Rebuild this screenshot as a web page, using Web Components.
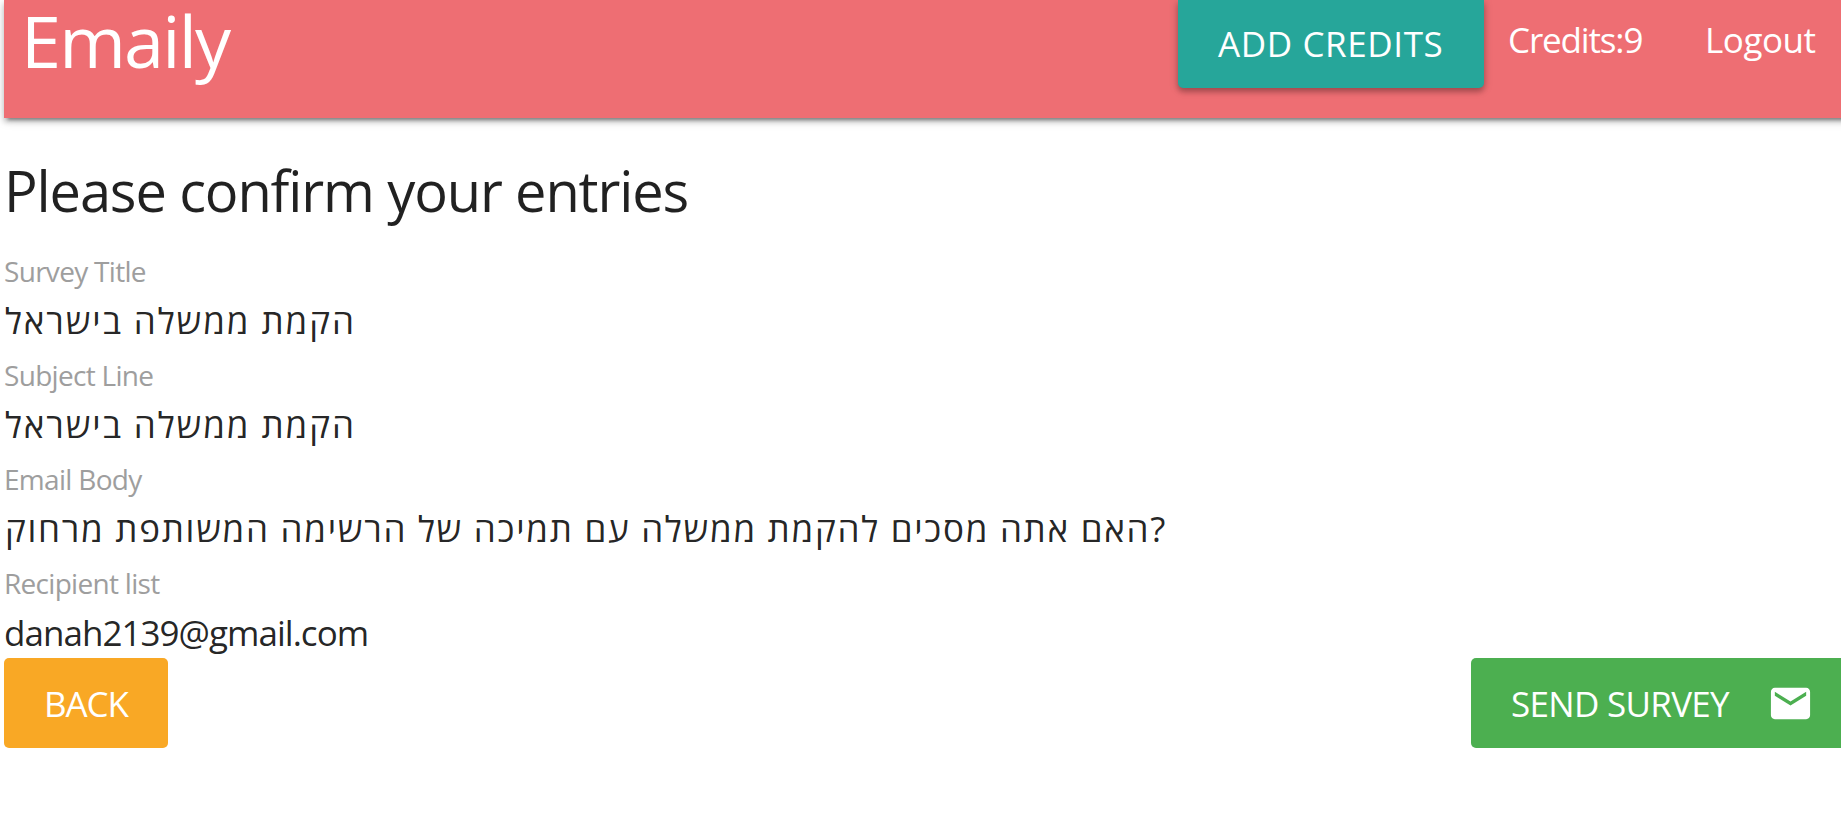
<!DOCTYPE html>
<html lang="en">
<head>
<meta charset="utf-8">
<title>Emaily</title>
<style>
body{margin:0;background:#fff;color:rgba(0,0,0,.87);font-family:"Open Sans","Noto Sans",sans-serif;font-size:35px}
</style>
</head>
<body>
<emaily-app></emaily-app>
<script>
class Base extends HTMLElement{
  constructor(){super();this.attachShadow({mode:'open'}).innerHTML=this.constructor.html}
}
customElements.define('app-button',class extends Base{
  static html=`<style>
  :host{display:flex;align-items:center;box-sizing:border-box;height:90px;padding:0 40px;border-radius:5px;color:#fff;line-height:90px;white-space:nowrap;background:var(--button-bg,#26a69a)}
  </style><slot></slot><slot name="icon"></slot>`;
});
customElements.define('mail-icon',class extends Base{
  static html=`<style>:host{display:block;width:47px;height:47px}svg{display:block}</style>
  <svg width="47" height="47" viewBox="0 0 24 24" fill="#fff"><path d="M20 4H4c-1.1 0-1.99.9-1.99 2L2 18c0 1.100.9 2 2 2h16c1.100 0 2-.9 2-2V6c0-1.100-.9-2-2-2zm0 4l-8 5-8-5V6l8 5 8-5v2z"/></svg>`;
});
customElements.define('app-header',class extends Base{
  static html=`<style>
  :host{display:flex;align-items:flex-start;height:118px;margin-right:-20px;padding-right:20px;color:#fff;background:#ee6e73;box-shadow:0 4px 5px 0 rgba(0,0,0,.2),0 2px 11px 0 rgba(0,0,0,.14),0 6px 3px -4px rgba(0,0,0,.3)}
  .logo{font-size:72px;line-height:81px;margin-left:17px;letter-spacing:-1.8px}
  nav{display:flex;margin-left:auto;line-height:79px;white-space:nowrap}
  app-button{width:306px;height:88px;border-radius:0 0 5px 5px;letter-spacing:.6px;box-shadow:0 4px 5px rgba(0,0,0,.2),0 2px 10px rgba(0,0,0,.2)}
  .credits{margin-left:24px;width:197px;letter-spacing:-1.15px}
  .logout{width:136px;letter-spacing:-.45px}
  </style>
  <div class="logo">Emaily</div><nav><app-button>ADD CREDITS</app-button><div class="credits">Credits:9</div><div class="logout">Logout</div></nav>`;
});
customElements.define('survey-entry',class extends Base{
  static html=`<style>
  :host{display:block;margin-bottom:5px;white-space:nowrap}
  .label{font-size:28px;line-height:50px;color:#9e9e9e;letter-spacing:-.7px}
  .value{line-height:49px}
  </style><div class="label"><slot name="label"></slot></div><div class="value"><slot></slot></div>`;
});
customElements.define('survey-review',class extends Base{
  static html=`<style>
  :host{display:block;padding-top:34px}
  h5{margin:0 0 18px;font-size:56px;line-height:76px;font-weight:400;white-space:nowrap;letter-spacing:-1.13px}
  survey-entry:last-of-type{margin-bottom:1px}
  .he{letter-spacing:1.9px;margin-left:1px}
  .body{letter-spacing:1.71px}
  .mail{letter-spacing:-.97px}
  footer{display:flex;justify-content:space-between}
  footer span{padding-top:2px}
  .back{--button-bg:#f9a825;width:164px;letter-spacing:-1.1px}
  .send{--button-bg:#4caf50;width:370px;border-radius:5px 0 0 5px;padding-right:27px;justify-content:space-between;letter-spacing:-.7px}
  </style>
  <h5>Please confirm your entries</h5>
  <survey-entry><span slot="label">Survey Title</span><span class="he">הקמת ממשלה בישראל</span></survey-entry>
  <survey-entry><span slot="label">Subject Line</span><span class="he">הקמת ממשלה בישראל</span></survey-entry>
  <survey-entry><span slot="label">Email Body</span><span class="he body">האם אתה מסכים להקמת ממשלה עם תמיכה של הרשימה המשותפת מרחוק?</span></survey-entry>
  <survey-entry><span slot="label">Recipient list</span><span class="mail">danah2139@gmail.com</span></survey-entry>
  <footer><app-button class="back"><span>BACK</span></app-button><app-button class="send"><span>SEND SURVEY</span><mail-icon slot="icon"></mail-icon></app-button></footer>`;
});
customElements.define('emaily-app',class extends Base{
  static html=`<style>:host{display:block;height:831px;padding-left:4px;overflow:hidden}</style><app-header></app-header><survey-review></survey-review>`;
});
</script>
</body>
</html>
